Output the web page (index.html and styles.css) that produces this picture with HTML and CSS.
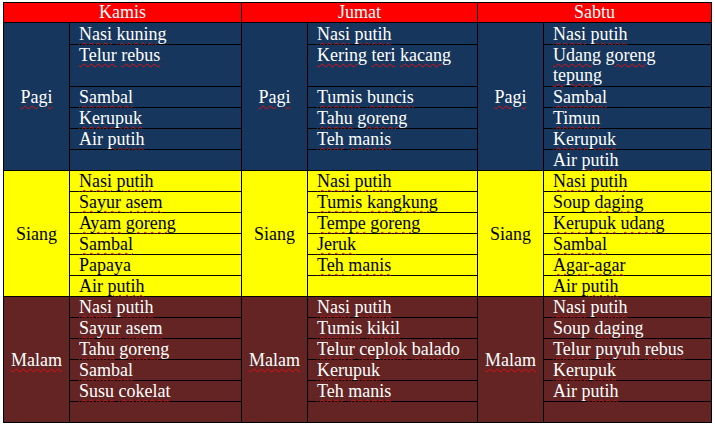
FILE: index.html
```html
<!DOCTYPE html>
<html>
<head>
<meta charset="utf-8">
<link rel="stylesheet" href="styles.css">
</head>
<body>
<div class="menu">
  <div class="hd">Kamis</div>
  <div class="hd">Jumat</div>
  <div class="hd">Sabtu</div>

  <!-- Pagi -->
  <div class="lbl pagi"><span class="sq">Pagi</span></div>
  <div class="it pagi first"><span class="sq">Nasi</span> <span class="sq">kuning</span></div>
  <div class="lbl pagi"><span class="sq">Pagi</span></div>
  <div class="it pagi first"><span class="sq">Nasi</span> <span class="sq">putih</span></div>
  <div class="lbl pagi"><span class="sq">Pagi</span></div>
  <div class="it pagi first"><span class="sq">Nasi</span> <span class="sq">putih</span></div>

  <div class="it pagi"><span class="sq">Telur</span> <span class="sq">rebus</span></div>
  <div class="it pagi"><span class="sq">Kering</span> <span class="sq">teri</span> <span class="sq">kacang</span></div>
  <div class="it pagi"><span class="sq">Udang</span> <span class="sq">goreng</span><br><span class="sq">tepung</span></div>

  <div class="it pagi"><span class="sq">Sambal</span></div>
  <div class="it pagi"><span class="sq">Tumis</span> <span class="sq">buncis</span></div>
  <div class="it pagi"><span class="sq">Sambal</span></div>

  <div class="it pagi"><span class="sq">Kerupuk</span></div>
  <div class="it pagi"><span class="sq">Tahu</span> <span class="sq">goreng</span></div>
  <div class="it pagi"><span class="sq">Timun</span></div>

  <div class="it pagi">Air <span class="sq">putih</span></div>
  <div class="it pagi"><span class="sq">Teh</span> <span class="sq">manis</span></div>
  <div class="it pagi"><span class="sq">Kerupuk</span></div>

  <div class="it pagi"></div>
  <div class="it pagi"></div>
  <div class="it pagi">Air <span class="sq">putih</span></div>

  <!-- Siang -->
  <div class="lbl siang">Siang</div>
  <div class="it siang"><span class="sq">Nasi</span> <span class="sq">putih</span></div>
  <div class="lbl siang">Siang</div>
  <div class="it siang"><span class="sq">Nasi</span> <span class="sq">putih</span></div>
  <div class="lbl siang">Siang</div>
  <div class="it siang"><span class="sq">Nasi</span> <span class="sq">putih</span></div>

  <div class="it siang"><span class="sq">Sayur</span> <span class="sq">asem</span></div>
  <div class="it siang"><span class="sq">Tumis</span> <span class="sq">kangkung</span></div>
  <div class="it siang">Soup <span class="sq">daging</span></div>

  <div class="it siang"><span class="sq">Ayam</span> <span class="sq">goreng</span></div>
  <div class="it siang"><span class="sq">Tempe</span> <span class="sq">goreng</span></div>
  <div class="it siang"><span class="sq">Kerupuk</span> <span class="sq">udang</span></div>

  <div class="it siang"><span class="sq">Sambal</span></div>
  <div class="it siang"><span class="sq">Jeruk</span></div>
  <div class="it siang"><span class="sq">Sambal</span></div>

  <div class="it siang">Papaya</div>
  <div class="it siang"><span class="sq">Teh</span> <span class="sq">manis</span></div>
  <div class="it siang"><span class="sq">Agar-agar</span></div>

  <div class="it siang">Air <span class="sq">putih</span></div>
  <div class="it siang"></div>
  <div class="it siang">Air <span class="sq">putih</span></div>

  <!-- Malam -->
  <div class="lbl malam"><span class="sq">Malam</span></div>
  <div class="it malam"><span class="sq">Nasi</span> <span class="sq">putih</span></div>
  <div class="lbl malam"><span class="sq">Malam</span></div>
  <div class="it malam"><span class="sq">Nasi</span> <span class="sq">putih</span></div>
  <div class="lbl malam"><span class="sq">Malam</span></div>
  <div class="it malam"><span class="sq">Nasi</span> <span class="sq">putih</span></div>

  <div class="it malam"><span class="sq">Sayur</span> <span class="sq">asem</span></div>
  <div class="it malam"><span class="sq">Tumis</span> <span class="sq">kikil</span></div>
  <div class="it malam">Soup <span class="sq">daging</span></div>

  <div class="it malam"><span class="sq">Tahu</span> <span class="sq">goreng</span></div>
  <div class="it malam"><span class="sq">Telur</span> <span class="sq">ceplok</span> <span class="sq">balado</span></div>
  <div class="it malam"><span class="sq">Telur</span> <span class="sq">puyuh</span> <span class="sq">rebus</span></div>

  <div class="it malam"><span class="sq">Sambal</span></div>
  <div class="it malam"><span class="sq">Kerupuk</span></div>
  <div class="it malam"><span class="sq">Kerupuk</span></div>

  <div class="it malam"><span class="sq">Susu</span> <span class="sq">cokelat</span></div>
  <div class="it malam"><span class="sq">Teh</span> <span class="sq">manis</span></div>
  <div class="it malam">Air <span class="sq">putih</span></div>

  <div class="it malam"></div>
  <div class="it malam"></div>
  <div class="it malam"></div>
</div>
</body>
</html>
```

FILE: styles.css
```css
html, body {
  margin: 0;
  padding: 0;
  background: #ffffff;
}

.menu {
  display: grid;
  grid-template-columns: 65px 171px 65px 169px 65px 167px;
  grid-template-rows: 19px 21px 41px repeat(16, 20px);
  gap: 1px;
  padding: 1px;
  background: #000000;
  width: max-content;
  margin: 2px 0 0 3px;
  font-family: "Liberation Serif", "Times New Roman", serif;
  font-size: 18px;
  line-height: 20px;
}

.hd {
  grid-column: span 2;
  background: #ff0000;
  color: #ffffff;
  text-align: center;
  line-height: 19px;
}

.lbl {
  grid-row: span 6;
  display: flex;
  align-items: center;
  justify-content: center;
}

.it {
  padding-left: 9px;
  white-space: nowrap;
}

.first {
  padding-top: 1px;
}

.pagi {
  background: #17365d;
  color: #ffffff;
}

.siang {
  background: #ffff00;
  color: #000000;
}

.malam {
  background: #632423;
  color: #ffffff;
}

.sq {
  text-decoration: underline wavy #e01010;
  text-decoration-thickness: 1px;
  text-underline-offset: 2px;
}
```
